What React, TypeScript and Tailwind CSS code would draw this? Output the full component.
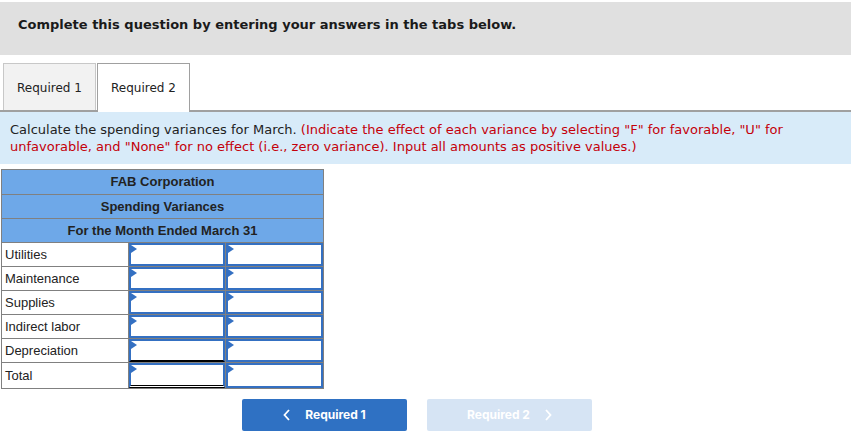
import React from "react"

const rows = ["Utilities", "Maintenance", "Supplies", "Indirect labor", "Depreciation", "Total"]

function Cell({ under }: { under?: "single" | "double" }) {
  const bottom =
    under === "single"
      ? "border-b-2 border-b-black"
      : under === "double"
      ? "border-b-[3px] border-double border-b-black"
      : ""
  return (
    <div className="w-[98px] border-l border-[#808080]">
      <div className={`relative h-full border-2 border-[#3470c2] bg-white ${bottom}`}>
        <span className="absolute left-0 top-0 h-0 w-0 border-y-[4px] border-l-[6px] border-y-transparent border-l-[#3470c2]" />
      </div>
    </div>
  )
}

export default function App() {
  return (
    <div className="w-[856px] h-[439px] bg-white" style={{ fontFamily: "'DejaVu Sans', Verdana, sans-serif" }}>
      <div className="pt-[2px] pr-[5px]">
        <div className="h-[53px] bg-[#e0e0e0] flex items-center pl-[18px] pb-[8px]">
          <span className="text-[13px] font-bold text-[#1a1a1a]">Complete this question by entering your answers in the tabs below.</span>
        </div>

        <div className="mt-[8px] flex items-start gap-px pl-[3px] border-b-2 border-[#a0a0a0]">
          <div className="h-[47px] w-[93px] bg-[#f2f2f2] border border-b-0 border-[#c8c8c8] flex items-center justify-center pt-[2px] text-[12px] text-[#222]">
            Required 1
          </div>
          <div className="h-[49px] w-[93px] bg-white border border-b-0 border-[#a0a0a0] flex items-center justify-center text-[12px] text-[#222] -mb-[2px] relative">
            Required 2
          </div>
        </div>

        <div className="h-[52px] bg-[#d8ebf9] pl-[10px] pt-[9px] text-[13px] leading-[17px] text-[#222]">
          Calculate the spending variances for March.{" "}
          <span className="text-[#c4000a]">
            (Indicate the effect of each variance by selecting "F" for favorable, "U" for unfavorable, and "None" for no effect (i.e., zero variance). Input all amounts as positive values.)
          </span>
        </div>
      </div>

      <div className="mt-[5px] ml-[1px] w-[323px] border border-[#808080]" style={{ fontFamily: "'Liberation Sans', Arial, sans-serif" }}>
        {["FAB Corporation", "Spending Variances", "For the Month Ended March 31"].map((t, i) => (
          <div key={t} className={`h-[24px] bg-[#6ea8e8] flex items-center justify-center text-[13px] font-bold text-[#222] ${i > 0 ? "border-t border-[#808080]" : ""}`}>
            {t}
          </div>
        ))}
        {rows.map((r, i) => (
          <div key={r} className={`flex border-t border-[#808080] ${i === 5 ? "h-[26px]" : "h-[24px]"}`}>
            <div className="w-[126px] pl-[3px] flex items-center text-[13px] text-[#222]">{r}</div>
            <Cell under={i === 4 ? "single" : i === 5 ? "double" : undefined} />
            <Cell />
          </div>
        ))}
      </div>

      <div className="mt-[10px] flex gap-[20px] pl-[242px]" style={{ fontFamily: "Inter, 'Liberation Sans', sans-serif" }}>
        <div className="h-[32px] w-[165px] rounded-[2px] bg-[#2f71c3] flex items-center justify-center gap-[14px] text-white text-[12px] font-bold">
          <svg width="8" height="12" viewBox="0 0 8 12" fill="none" stroke="white" strokeWidth="1.8"><path d="M6 1 1.5 6 6 11" /></svg>
          Required 1
        </div>
        <div className="h-[32px] w-[165px] rounded-[2px] bg-[#d6e4f4] flex items-center justify-center gap-[14px] text-white text-[12px] font-bold">
          Required 2
          <svg width="8" height="12" viewBox="0 0 8 12" fill="none" stroke="white" strokeWidth="1.8"><path d="M2 1 6.5 6 2 11" /></svg>
        </div>
      </div>
    </div>
  )
}
